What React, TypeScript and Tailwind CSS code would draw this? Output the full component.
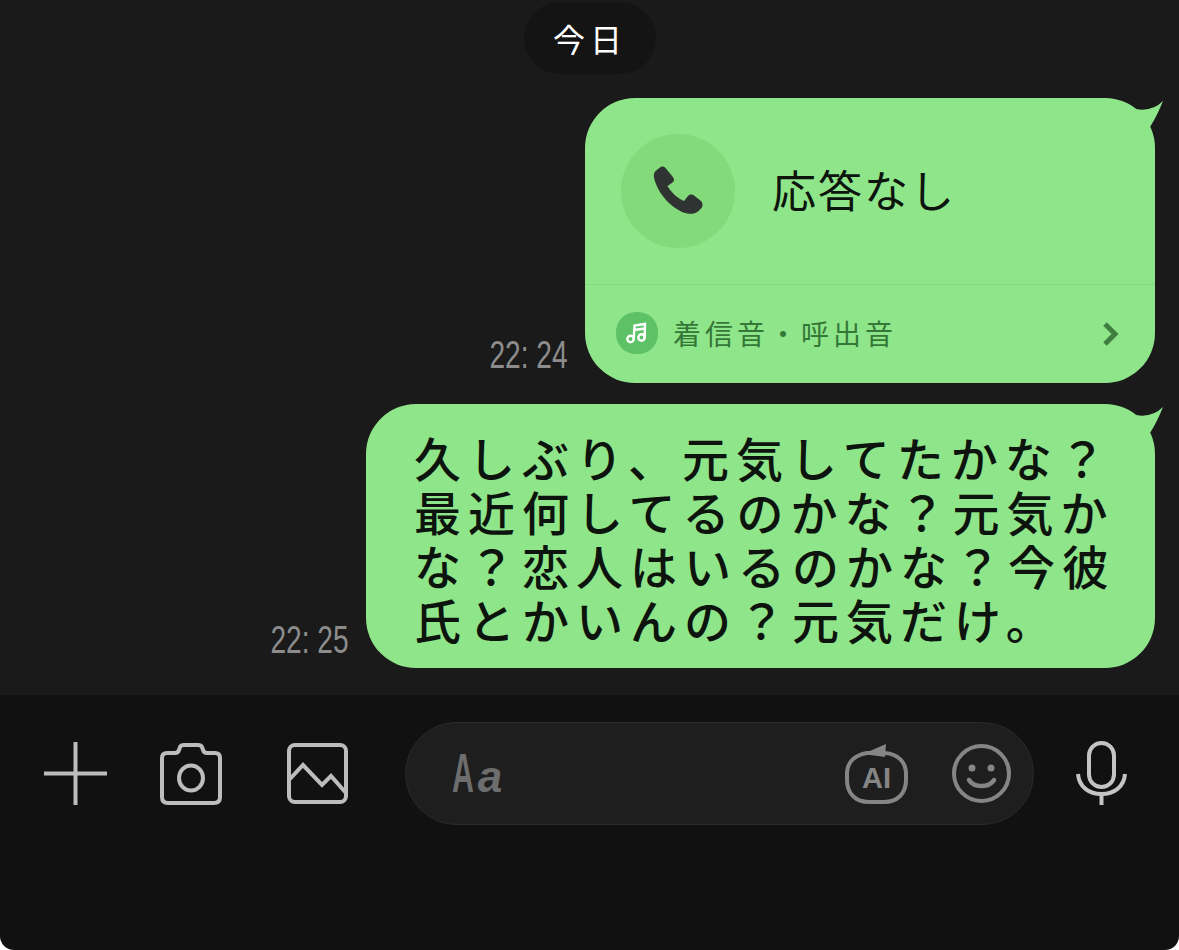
const JP = "font-['Noto_Sans_CJK_JP','Noto_Sans',sans-serif]";

// speech-bubble tail, sits over the top right corner of a bubble
function Tail() {
  return (
    <svg className="absolute right-[-15px] top-0 h-[35px] w-[40px]" viewBox="0 0 40 35" fill="#8fe589">
      <path d="M6 11 Q22 14 33 3 Q27 18 20 29 L8 26 Z" />
    </svg>
  );
}

function Time({ children }: { children: string }) {
  return (
    <div className="mr-[17px] mb-[10px] flex w-[78px] justify-end">
      <span className="shrink-0 origin-right scale-x-[0.74] whitespace-nowrap font-['Liberation_Sans',sans-serif] text-[38px] leading-[36px] text-[#8c8c8c]">
        {children}
      </span>
    </div>
  );
}

function CallBubble() {
  return (
    <div className="relative w-[570px] rounded-[50px] bg-[#8fe589]">
      <Tail />
      <div className="flex h-[187px] items-start border-b border-[#83da7d] pl-[36px] pt-[36px]">
        <div className="flex h-[114px] w-[114px] items-center justify-center rounded-full bg-[#82da7b]">
          <svg width="50" height="50" viewBox="0 0 50 50" fill="#2f3331">
            <path d="M7 1.5 C9 0 11 .5 12.5 2 L19.5 10.5 C21.5 13 21.5 15 19.5 16.5 L14.5 20 C18 26 24 32 31 35 L35 30 C36.5 28.5 39 28 41 29.5 L48 35 C50 37 50 40.5 48.5 42 L45 45.5 C41 48.5 35 48.5 29 46 C17 40 7 29 3 18 C0.5 12 0 8 2.5 5 Z" />
          </svg>
        </div>
        <span className={`${JP} ml-[37px] mt-[22px] text-[44px] leading-[66px] tracking-[2px] text-[#0d130d]`}>応答なし</span>
      </div>
      <div className="flex h-[98px] items-start pl-[31px] pt-[27px]">
        <div className="flex h-[42px] w-[42px] items-center justify-center rounded-[20px] bg-[#5dc266]">
          <svg width="24" height="24" viewBox="0 0 24 24" fill="none" stroke="#ffffff" strokeWidth="2.4">
            <circle cx="5.5" cy="18" r="3.2" />
            <circle cx="16.5" cy="16.5" r="3.2" />
            <path d="M8.7 18 L9.5 4.5 L20 3 L19.7 16.5 M9.2 9 L20 7.5" />
          </svg>
        </div>
        <span className={`${JP} ml-[15px] mt-[1px] whitespace-nowrap text-[28px] leading-[40px] tracking-[4px] text-[#347838]`}>着信音・呼出音</span>
        <svg className="ml-[204px] mt-[9px]" width="20" height="26" viewBox="0 0 20 26" fill="none" stroke="#3f7f41" strokeWidth="5">
          <path d="M4 3 L14 13 L4 23" />
        </svg>
      </div>
    </div>
  );
}

function TextBubble() {
  const lines = ["久しぶり、元気してたかな？", "最近何してるのかな？元気か", "な？恋人はいるのかな？今彼", "氏とかいんの？元気だけ。"];
  return (
    <div className="relative h-[264px] w-[789px] rounded-[50px] bg-[#8fe589] pl-[48px] pt-[26px]">
      <Tail />
      {lines.map((l) => (
        <div key={l} className={`${JP} h-[54px] whitespace-nowrap text-[47px] font-medium leading-[54px] tracking-[7px] text-[#0d130d]`}>
          {l}
        </div>
      ))}
    </div>
  );
}

function InputBar() {
  return (
    <div className="h-[255px] rounded-b-[14px] bg-[#111111] pl-[44px] pt-[27px]">
      <div className="flex h-[103px] items-center">
        <svg width="63" height="63" viewBox="0 0 63 63" stroke="#bdbdbd" strokeWidth="4">
          <path d="M31.5 0 V63 M0 31.5 H63" />
        </svg>
        <svg className="ml-[53px]" width="62" height="62" viewBox="0 0 62 62" fill="none" stroke="#bdbdbd" strokeWidth="4">
          <path d="M7 10 H15 Q18 10 19 7 L20 4 Q21 2 24 2 H38 Q41 2 42 4 L43 7 Q44 10 47 10 H55 Q60 10 60 15 V54 Q60 60 54 60 H8 Q2 60 2 54 V15 Q2 10 7 10 Z" />
          <ellipse cx="31" cy="35" rx="12" ry="12.5" />
        </svg>
        <svg className="ml-[65px]" width="61" height="61" viewBox="0 0 61 61" fill="none" stroke="#bdbdbd" strokeWidth="4">
          <rect x="2" y="2" width="57" height="57" rx="6" />
          <path d="M2 37 L16 22 L35 42 L44 33 L59 50" />
        </svg>
        <div className="ml-[57px] flex h-[103px] w-[629px] items-center rounded-[52px] border border-[#2a2a2a] bg-[#1e1e1e] pl-[46px]">
          <span className="flex items-baseline font-['Liberation_Sans',sans-serif] leading-none text-[#6d6d6d]">
            <span className="origin-left scale-x-[0.55] text-[55px] font-bold">A</span>
            <span className="-ml-[14px] text-[44px] font-bold italic">a</span>
          </span>
          <svg className="ml-auto" width="63" height="60" viewBox="0 0 63 60" fill="none" stroke="#858585" strokeWidth="4">
            <path d="M22 9 C10 11 2 18 2 30 V36 C2 50 11 58 24 58 H39 C52 58 61 50 61 36 V30 C61 18 53 10 40 9 H22 Z" />
            <path d="M18 10 L41 0 L40 13 Z" fill="#858585" stroke="none" />
            <text x="31.5" y="44" textAnchor="middle" fontFamily="Liberation Sans, sans-serif" fontSize="29" fontWeight="700" fill="#858585" stroke="none">AI</text>
          </svg>
          <svg className="ml-[44px] mr-[22px]" width="59" height="59" viewBox="0 0 59 59" fill="none" stroke="#858585" strokeWidth="4">
            <circle cx="29.5" cy="29.5" r="27.5" />
            <circle cx="20" cy="24" r="3.5" fill="#858585" stroke="none" />
            <circle cx="39" cy="24" r="3.5" fill="#858585" stroke="none" />
            <path d="M17 36 C22 44 37 44 42 36" strokeLinecap="round" strokeWidth="4.5" />
          </svg>
        </div>
        <svg className="ml-[42px] -mt-[1px]" width="51" height="64" viewBox="0 0 51 64" fill="none" stroke="#c4c4c4" strokeWidth="4">
          <rect x="13" y="2" width="25" height="44" rx="12.5" />
          <path d="M2 33 C3 46 13 53 25.5 53 C38 53 48 46 49 33 M25.5 53 V64" />
        </svg>
      </div>
    </div>
  );
}

export default function App() {
  return (
    <div className="h-[950px] w-[1179px] overflow-hidden bg-white">
      <div className="flex h-[695px] flex-col bg-[#1a1a1a] pr-[24px] pt-[2px]">
        <div className="ml-[524px] flex h-[72px] w-[132px] items-center justify-center rounded-[36px] bg-[#141414]">
          <span className={`${JP} text-[32px] leading-none tracking-[5px] text-white`}>今日</span>
        </div>
        <div className="mt-[24px] flex items-end justify-end">
          <Time>22: 24</Time>
          <CallBubble />
        </div>
        <div className="mt-[21px] flex items-end justify-end">
          <Time>22: 25</Time>
          <TextBubble />
        </div>
      </div>
      <InputBar />
    </div>
  );
}
